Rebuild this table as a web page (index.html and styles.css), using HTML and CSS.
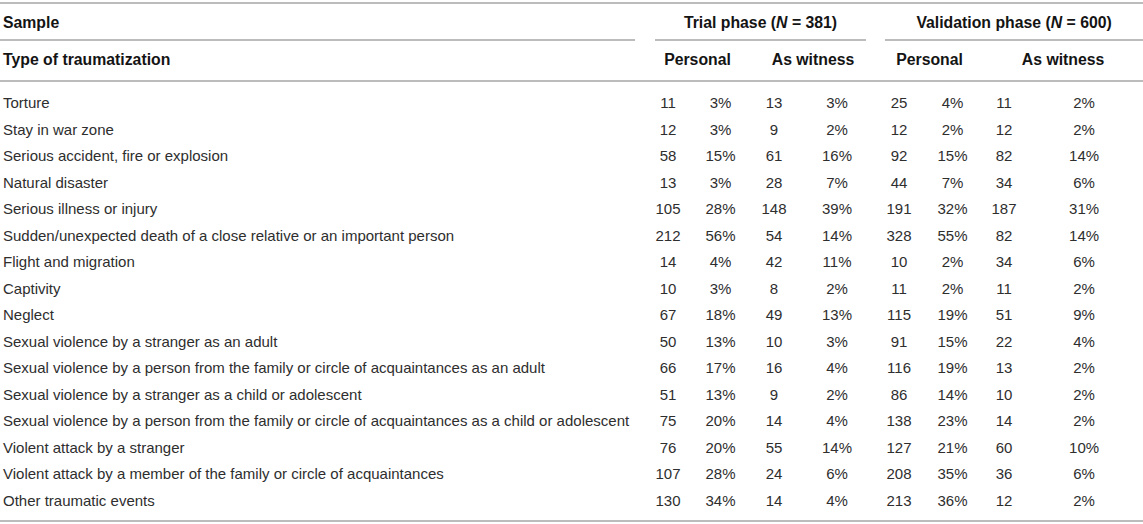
FILE: index.html
```html
<!DOCTYPE html>
<html lang="en">
<head>
  <meta charset="UTF-8" />
  <meta name="viewport" content="width=device-width, initial-scale=1.0"/>
  <title>Types of traumatization</title>
  <link rel="stylesheet" href="styles.css">
</head>
<body>
  <table class="trauma-table">
    <colgroup>
      <col class="c-label">
      <col class="c-tp-n">
      <col class="c-tp-p">
      <col class="c-tw-n">
      <col class="c-tw-p">
      <col class="c-vp-n">
      <col class="c-vp-p">
      <col class="c-vw-n">
      <col class="c-vw-p">
    </colgroup>
    <thead>
      <tr class="group-row">
        <th class="label"><div class="rule first">Sample</div></th>
        <th colspan="4"><div class="rule">Trial phase (<i>N</i> = 381)</div></th>
        <th colspan="4"><div class="rule last">Validation phase (<i>N</i> = 600)</div></th>
      </tr>
      <tr class="sub-row">
        <th class="label">Type of traumatization</th>
        <th colspan="2">Personal</th>
        <th colspan="2">As witness</th>
        <th colspan="2">Personal</th>
        <th colspan="2">As witness</th>
      </tr>
    </thead>
    <tbody>
      <tr><td>Torture</td><td>11</td><td>3%</td><td>13</td><td>3%</td><td>25</td><td>4%</td><td>11</td><td>2%</td></tr>
      <tr><td>Stay in war zone</td><td>12</td><td>3%</td><td>9</td><td>2%</td><td>12</td><td>2%</td><td>12</td><td>2%</td></tr>
      <tr><td>Serious accident, fire or explosion</td><td>58</td><td>15%</td><td>61</td><td>16%</td><td>92</td><td>15%</td><td>82</td><td>14%</td></tr>
      <tr><td>Natural disaster</td><td>13</td><td>3%</td><td>28</td><td>7%</td><td>44</td><td>7%</td><td>34</td><td>6%</td></tr>
      <tr><td>Serious illness or injury</td><td>105</td><td>28%</td><td>148</td><td>39%</td><td>191</td><td>32%</td><td>187</td><td>31%</td></tr>
      <tr><td>Sudden/unexpected death of a close relative or an important person</td><td>212</td><td>56%</td><td>54</td><td>14%</td><td>328</td><td>55%</td><td>82</td><td>14%</td></tr>
      <tr><td>Flight and migration</td><td>14</td><td>4%</td><td>42</td><td>11%</td><td>10</td><td>2%</td><td>34</td><td>6%</td></tr>
      <tr><td>Captivity</td><td>10</td><td>3%</td><td>8</td><td>2%</td><td>11</td><td>2%</td><td>11</td><td>2%</td></tr>
      <tr><td>Neglect</td><td>67</td><td>18%</td><td>49</td><td>13%</td><td>115</td><td>19%</td><td>51</td><td>9%</td></tr>
      <tr><td>Sexual violence by a stranger as an adult</td><td>50</td><td>13%</td><td>10</td><td>3%</td><td>91</td><td>15%</td><td>22</td><td>4%</td></tr>
      <tr><td>Sexual violence by a person from the family or circle of acquaintances as an adult</td><td>66</td><td>17%</td><td>16</td><td>4%</td><td>116</td><td>19%</td><td>13</td><td>2%</td></tr>
      <tr><td>Sexual violence by a stranger as a child or adolescent</td><td>51</td><td>13%</td><td>9</td><td>2%</td><td>86</td><td>14%</td><td>10</td><td>2%</td></tr>
      <tr><td>Sexual violence by a person from the family or circle of acquaintances as a child or adolescent</td><td>75</td><td>20%</td><td>14</td><td>4%</td><td>138</td><td>23%</td><td>14</td><td>2%</td></tr>
      <tr><td>Violent attack by a stranger</td><td>76</td><td>20%</td><td>55</td><td>14%</td><td>127</td><td>21%</td><td>60</td><td>10%</td></tr>
      <tr><td>Violent attack by a member of the family or circle of acquaintances</td><td>107</td><td>28%</td><td>24</td><td>6%</td><td>208</td><td>35%</td><td>36</td><td>6%</td></tr>
      <tr><td>Other traumatic events</td><td>130</td><td>34%</td><td>14</td><td>4%</td><td>213</td><td>36%</td><td>12</td><td>2%</td></tr>
    </tbody>
  </table>
</body>
</html>
```

FILE: styles.css
```css
:root {
  --rule: #bcbcbc;
  --text: #2e2e2e;
  --head: #141414;
}

* {
  box-sizing: border-box;
}

body {
  margin: 0;
  padding: 0;
  background: #fff;
  font-family: 'Liberation Sans', Arial, sans-serif;
  color: var(--text);
}

.trauma-table {
  width: 1143px;
  margin-top: 2px;
  border-collapse: collapse;
  table-layout: fixed;
  border-top: 2px solid var(--rule);
  border-bottom: 2px solid var(--rule);
}

.c-label { width: 645px; }
.c-tp-n { width: 46px; }
.c-tp-p { width: 59px; }
.c-tw-n { width: 48px; }
.c-tw-p { width: 78px; }
.c-vp-n { width: 46px; }
.c-vp-p { width: 61px; }
.c-vw-n { width: 42px; }
.c-vw-p { width: 118px; }

th {
  font-size: 15.8px;
  font-weight: 700;
  line-height: 17px;
  color: var(--head);
  text-align: center;
  white-space: nowrap;
}

th.label {
  text-align: left;
}

/* first header row: rules with gaps between groups */
.group-row th {
  padding: 0;
}

.rule {
  margin: 0 10px;
  padding: 10px 0 8px;
  border-bottom: 2px solid var(--rule);
}

.rule.first {
  margin-left: 0;
  padding-left: 3px;
}

.rule.last {
  margin-left: 9px;
  margin-right: 0;
}

.sub-row th {
  padding: 10px 0 12px;
  border-bottom: 2px solid var(--rule);
}

.sub-row th.label {
  padding-left: 3px;
}

td {
  font-size: 15px;
  line-height: 26.5px;
  padding: 0;
  text-align: center;
  white-space: nowrap;
}

td:first-child {
  text-align: left;
  padding-left: 3px;
}

tbody tr:first-child td {
  padding-top: 8px;
}

tbody tr:last-child td {
  padding-bottom: 6px;
}
```
